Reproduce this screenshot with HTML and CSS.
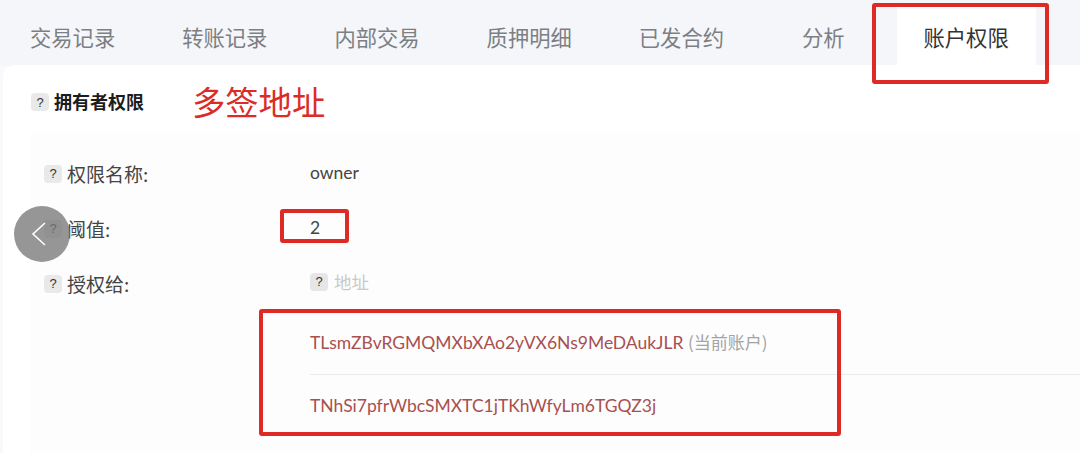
FILE: index.html
```html
<!DOCTYPE html>
<html lang="zh">
<head>
<meta charset="utf-8">
<title>账户权限</title>
<link rel="stylesheet" href="styles.css">
</head>
<body>
<div class="page">
  <nav class="tabs">
    <a class="tab">交易记录</a>
    <a class="tab">转账记录</a>
    <a class="tab">内部交易</a>
    <a class="tab">质押明细</a>
    <a class="tab">已发合约</a>
    <a class="tab tab-short">分析</a>
    <a class="tab tab-active">账户权限</a>
  </nav>
  <main class="panel">
    <header class="panel-head">
      <span class="help">?</span>
      <h2 class="panel-title">拥有者权限</h2>
      <span class="note">多签地址</span>
    </header>
    <section class="details">
      <div class="row row-name">
        <div class="label"><span class="help">?</span>权限名称:</div>
        <div class="value">owner</div>
      </div>
      <div class="row row-threshold">
        <div class="label"><span class="help">?</span>阈值:</div>
        <div class="value">2</div>
      </div>
      <div class="row row-grant">
        <div class="label"><span class="help">?</span>授权给:</div>
        <div class="value value-list">
          <div class="addr-head"><span class="help">?</span>地址</div>
          <div class="addr-row addr-first"><a class="addr">TLsmZBvRGMQMXbXAo2yVX6Ns9MeDAukJLR</a> <span class="current">(当前账户)</span></div>
          <div class="addr-row addr-second"><a class="addr">TNhSi7pfrWbcSMXTC1jTKhWfyLm6TGQZ3j</a></div>
        </div>
      </div>
    </section>
  </main>
  <div class="mark mark-tab"></div>
  <div class="mark mark-threshold"></div>
  <div class="mark mark-addrs"></div>
  <button class="back" aria-label="返回">
    <svg width="18" height="24" viewBox="0 0 18 24"><path d="M15 1 L3 12 L15 23" fill="none" stroke="#fff" stroke-width="1.6"/></svg>
  </button>
</div>
</body>
</html>
```
FILE: styles.css
```css
* { box-sizing: border-box; }
html, body { margin: 0; padding: 0; }
body {
  width: 1080px;
  height: 453px;
  overflow: hidden;
  background: #f8f9fb;
  font-family: "Noto Sans CJK SC", "Noto Sans", sans-serif;
  color: #333;
}
.page { position: relative; width: 1080px; height: 453px; overflow: hidden; background: #f8f9fb; }

.tabs {
  display: flex;
  height: 66px;
  padding-top: 4px;
  padding-left: 30px;
  background: #f4f6f9;
}
.tab {
  height: 62px;
  line-height: 65px;
  font-size: 21.3px;
  color: #7c7f84;
  margin-right: 67px;
  white-space: nowrap;
}
.tab-short { margin-left: 11px; margin-right: 52px; }
.tab-active {
  width: 139px;
  margin: 0;
  text-align: center;
  background: #fff;
  color: #333;
}

.panel {
  position: relative;
  margin-top: -1px;
  margin-left: 3px;
  height: 388px;
  background: #fff;
  border-top-left-radius: 12px;
  padding-left: 27px;
}
.panel-head {
  display: flex;
  align-items: center;
  height: 68px;
  padding-top: 4px;
}
.panel-head .help { margin: 2px 0 0 1px; }
.panel-title {
  margin: 0 0 0 5px;
  font-size: 18px;
  font-weight: 700;
  color: #1c1c1c;
  line-height: 1;
}
.note {
  margin-left: 48px;
  font-size: 33.3px;
  line-height: 1;
  color: #dc2c27;
}
.help {
  display: inline-flex;
  align-items: center;
  justify-content: center;
  flex: none;
  width: 18px;
  height: 18px;
  border-radius: 4px;
  background: #e9e9e9;
  font-family: "Liberation Sans", sans-serif;
  font-size: 13px;
  font-weight: 400;
  color: #333;
}
.details {
  background: #fdfdfd;
  padding: 25px 0 0 13px;
  height: 320px;
}
.row { display: flex; font-size: 19px; }
.row-name { height: 55px; }
.row-threshold { height: 55px; }
.label {
  display: flex;
  align-items: center;
  width: 267px;
  height: 30px;
  flex: none;
  color: #444;
}
.label .help { margin: 1px 5px 0 1px; }
.value {
  flex: 1;
  font-family: Lato, sans-serif;
  font-size: 17.5px;
  line-height: 30px;
  color: #444;
  min-width: 0;
}
.addr-head {
  display: flex;
  align-items: center;
  height: 26px;
  margin-top: 1px;
  font-family: "Noto Sans CJK SC", sans-serif;
  color: #c9c9c9;
}
.addr-head .help { margin-right: 6px; background: #e6e6e6; }
.addr-row {
  white-space: nowrap;
}
.addr-first {
  height: 63px;
  line-height: 60px;
  margin-top: 17px;
  border-bottom: 1px solid #ebebeb;
}
.addr-second { height: 60px; line-height: 61px; }
.addr { color: #a85050; }
.current { color: #a3a3a3; font-family: "Noto Sans CJK SC", sans-serif; font-size: 17px; }

.mark {
  position: absolute;
  border: 4px solid #dd2a25;
  border-radius: 3px;
}
.mark-tab { left: 872px; top: 3px; width: 177px; height: 81px; }
.mark-threshold { left: 280px; top: 209px; width: 69px; height: 34px; }
.mark-addrs { left: 259px; top: 309px; width: 582px; height: 127px; }

.back {
  position: absolute;
  left: 14px;
  top: 206px;
  width: 56px;
  height: 56px;
  padding: 0 6px 0 0;
  border: 0;
  border-radius: 50%;
  background: rgba(120,120,120,.78);
  display: flex;
  align-items: center;
  justify-content: center;
}
```
